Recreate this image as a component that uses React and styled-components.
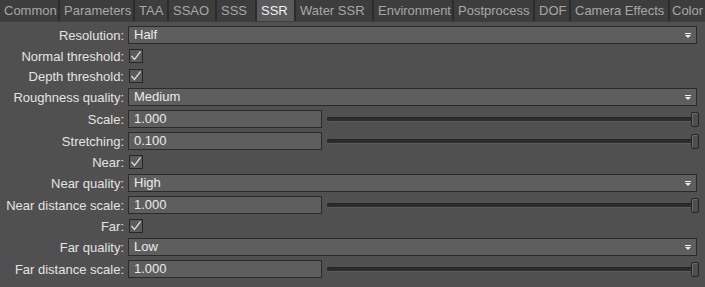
import React from "react";
import styled, { createGlobalStyle } from "styled-components";

const Global = createGlobalStyle`
  html, body { margin: 0; padding: 0; background: #505050; }
  body { font-family: "Liberation Sans", Arial, sans-serif; font-size: 13px; }
`;

const Page = styled.div`
  width: 705px;
  height: 287px;
  background: #505050;
  overflow: hidden;
  display: flex;
  flex-direction: column;
`;

const TabBar = styled.div`
  display: flex;
  height: 21px;
  background: #2c2c2c;
  border-bottom: 1px solid #3e3e3e;
  gap: 2px;
  white-space: nowrap;
  overflow: hidden;
`;

const Tab = styled.div`
  flex: none;
  width: ${(p) => p.$w}px;
  height: 21px;
  line-height: 22px;
  padding-left: ${(p) => (p.$last ? 2 : 4)}px;
  background: ${(p) => (p.$active ? "#5a5a5a" : "#3d3d3d")};
  color: ${(p) => (p.$active ? "#f2f2f2" : "#a8a8a8")};
  box-sizing: border-box;
`;

const Form = styled.div`
  display: flex;
  flex-direction: column;
  gap: 4px;
  padding: 4px 8px 0 0;
`;

const Row = styled.div`
  display: grid;
  grid-template-columns: 124px 1fr;
  column-gap: 4px;
  align-items: center;
  height: ${(p) => (p.$short ? "16px" : "18px")};
`;

const Label = styled.div`
  text-align: right;
  color: #e4e4e4;
  white-space: nowrap;
`;

const Field = styled.div`
  height: 18px;
  box-sizing: border-box;
  background: #5e5e5e;
  border: 1px solid #2a2a2a;
  color: #ececec;
  padding: 0 5px;
  line-height: 16px;
  display: flex;
  align-items: center;
  justify-content: space-between;
`;

const NumberRow = styled.div`
  display: grid;
  grid-template-columns: 194px 1fr;
  column-gap: 5px;
  align-items: center;
`;

const Slider = styled.div`
  position: relative;
  height: 18px;
  display: flex;
  align-items: center;
`;

const Track = styled.div`
  flex: 1;
  height: 5px;
  box-sizing: border-box;
  background: #2d2d2d;
  border-radius: 2px;
  border-bottom: 1px solid #5c5c5c;
  box-shadow: inset 0 1px 0 #242424;
`;

const Handle = styled.div`
  position: absolute;
  right: -2px;
  top: 2px;
  width: 8px;
  height: 15px;
  box-sizing: border-box;
  background: #4e4e4e;
  border: 1px solid #262626;
  border-radius: 2px;
  box-shadow: inset 1px 1px 0 #6a6a6a;
`;

const CheckBox = styled.div`
  width: 14px;
  height: 14px;
  box-sizing: border-box;
  border: 1px solid #262626;
  background: #5a5a5a;
  margin-left: 1px;
  display: flex;
  align-items: center;
  justify-content: center;
`;

const Arrow = () => (
  <svg width="6" height="5" viewBox="0 0 6 5">
    <rect x="0" y="0" width="6" height="1" fill="#f0f0f0" />
    <path d="M0 2 H6 L3 5 Z" fill="#f0f0f0" />
  </svg>
);

const Check = () => (
  <svg width="12" height="12" viewBox="0 0 12 12">
    <path d="M1.5 6 L4.5 9.5 L10.5 1.5" stroke="#d8d8d8" strokeWidth="1.3" fill="none" />
  </svg>
);

const tabs = [
  ["Common", 58],
  ["Parameters", 73],
  ["TAA", 32],
  ["SSAO", 46],
  ["SSS", 38],
  ["SSR", 37],
  ["Water SSR", 76],
  ["Environment", 78],
  ["Postprocess", 79],
  ["DOF", 34],
  ["Camera Effects", 97],
  ["Color", 35],
];

const rows = [
  { label: "Resolution:", type: "select", value: "Half" },
  { label: "Normal threshold:", type: "check" },
  { label: "Depth threshold:", type: "check" },
  { label: "Roughness quality:", type: "select", value: "Medium" },
  { label: "Scale:", type: "number", value: "1.000" },
  { label: "Stretching:", type: "number", value: "0.100" },
  { label: "Near:", type: "check" },
  { label: "Near quality:", type: "select", value: "High" },
  { label: "Near distance scale:", type: "number", value: "1.000" },
  { label: "Far:", type: "check" },
  { label: "Far quality:", type: "select", value: "Low" },
  { label: "Far distance scale:", type: "number", value: "1.000" },
];

export default function App() {
  return (
    <Page>
      <Global />
      <TabBar>
        {tabs.map(([t, w], i) => (
          <Tab key={t} $w={w} $last={i === tabs.length - 1} $active={t === "SSR"}>{t}</Tab>
        ))}
      </TabBar>
      <Form>
        {rows.map((r) => (
          <Row key={r.label} $short={r.type === "check"}>
            <Label>{r.label}</Label>
            {r.type === "select" && (
              <Field>
                <span>{r.value}</span>
                <Arrow />
              </Field>
            )}
            {r.type === "check" && (
              <CheckBox>
                <Check />
              </CheckBox>
            )}
            {r.type === "number" && (
              <NumberRow>
                <Field>{r.value}</Field>
                <Slider>
                  <Track />
                  <Handle />
                </Slider>
              </NumberRow>
            )}
          </Row>
        ))}
      </Form>
    </Page>
  );
}
